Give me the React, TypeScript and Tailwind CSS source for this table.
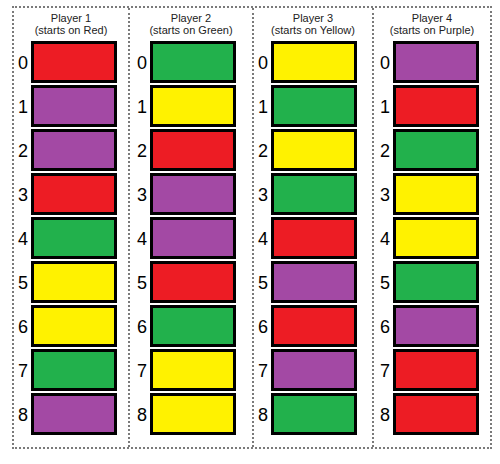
import React from "react";

const R = "#ED1C24";
const G = "#22B14C";
const Y = "#FFF200";
const P = "#A349A4";

type Col = { title: string; sub: string; colors: string[]; w: string; pl: string; border: boolean };

const cols: Col[] = [
  { title: "Player 1", sub: "(starts on Red)", colors: [R, P, P, R, G, Y, Y, G, P], w: "w-[114px]", pl: "pl-[4px]", border: false },
  { title: "Player 2", sub: "(starts on Green)", colors: [G, Y, R, P, P, R, G, Y, Y], w: "w-[124px]", pl: "pl-[7px]", border: true },
  { title: "Player 3", sub: "(starts on Yellow)", colors: [Y, G, Y, G, R, P, R, P, G], w: "w-[120px]", pl: "pl-[4px]", border: true },
  { title: "Player 4", sub: "(starts on Purple)", colors: [P, R, G, Y, Y, G, P, R, R], w: "w-[118px]", pl: "pl-[6px]", border: true },
];

export default function App() {
  return (
    <div className="w-[500px] h-[464px] bg-white pt-[6px] pl-[12px]" style={{ fontFamily: '"Liberation Sans", Arial, sans-serif' }}>
      <div className="w-[480px] h-[443px] border-2 border-dotted border-[#7a7a7a] flex">
        {cols.map((c, i) => (
          <div key={i} className={`${c.w} h-full flex flex-col ${c.border ? "border-l-2 border-dotted border-[#7a7a7a]" : ""}`}>
            <div className="pt-[4px] mb-[5px] text-center text-[11px] leading-[12px] text-[#222]">
              <div>{c.title}</div>
              <div>{c.sub}</div>
            </div>
            <div className={`flex flex-col gap-[2px] ${c.pl}`}>
              {c.colors.map((col, j) => (
                <div key={j} className="flex items-center h-[42px]">
                  <div className="w-[13px] text-[18px] leading-none text-black pt-[2px]">{j}</div>
                  <div className="w-[86px] h-[42px] border-[3px] border-black" style={{ backgroundColor: col }} />
                </div>
              ))}
            </div>
          </div>
        ))}
      </div>
    </div>
  );
}
